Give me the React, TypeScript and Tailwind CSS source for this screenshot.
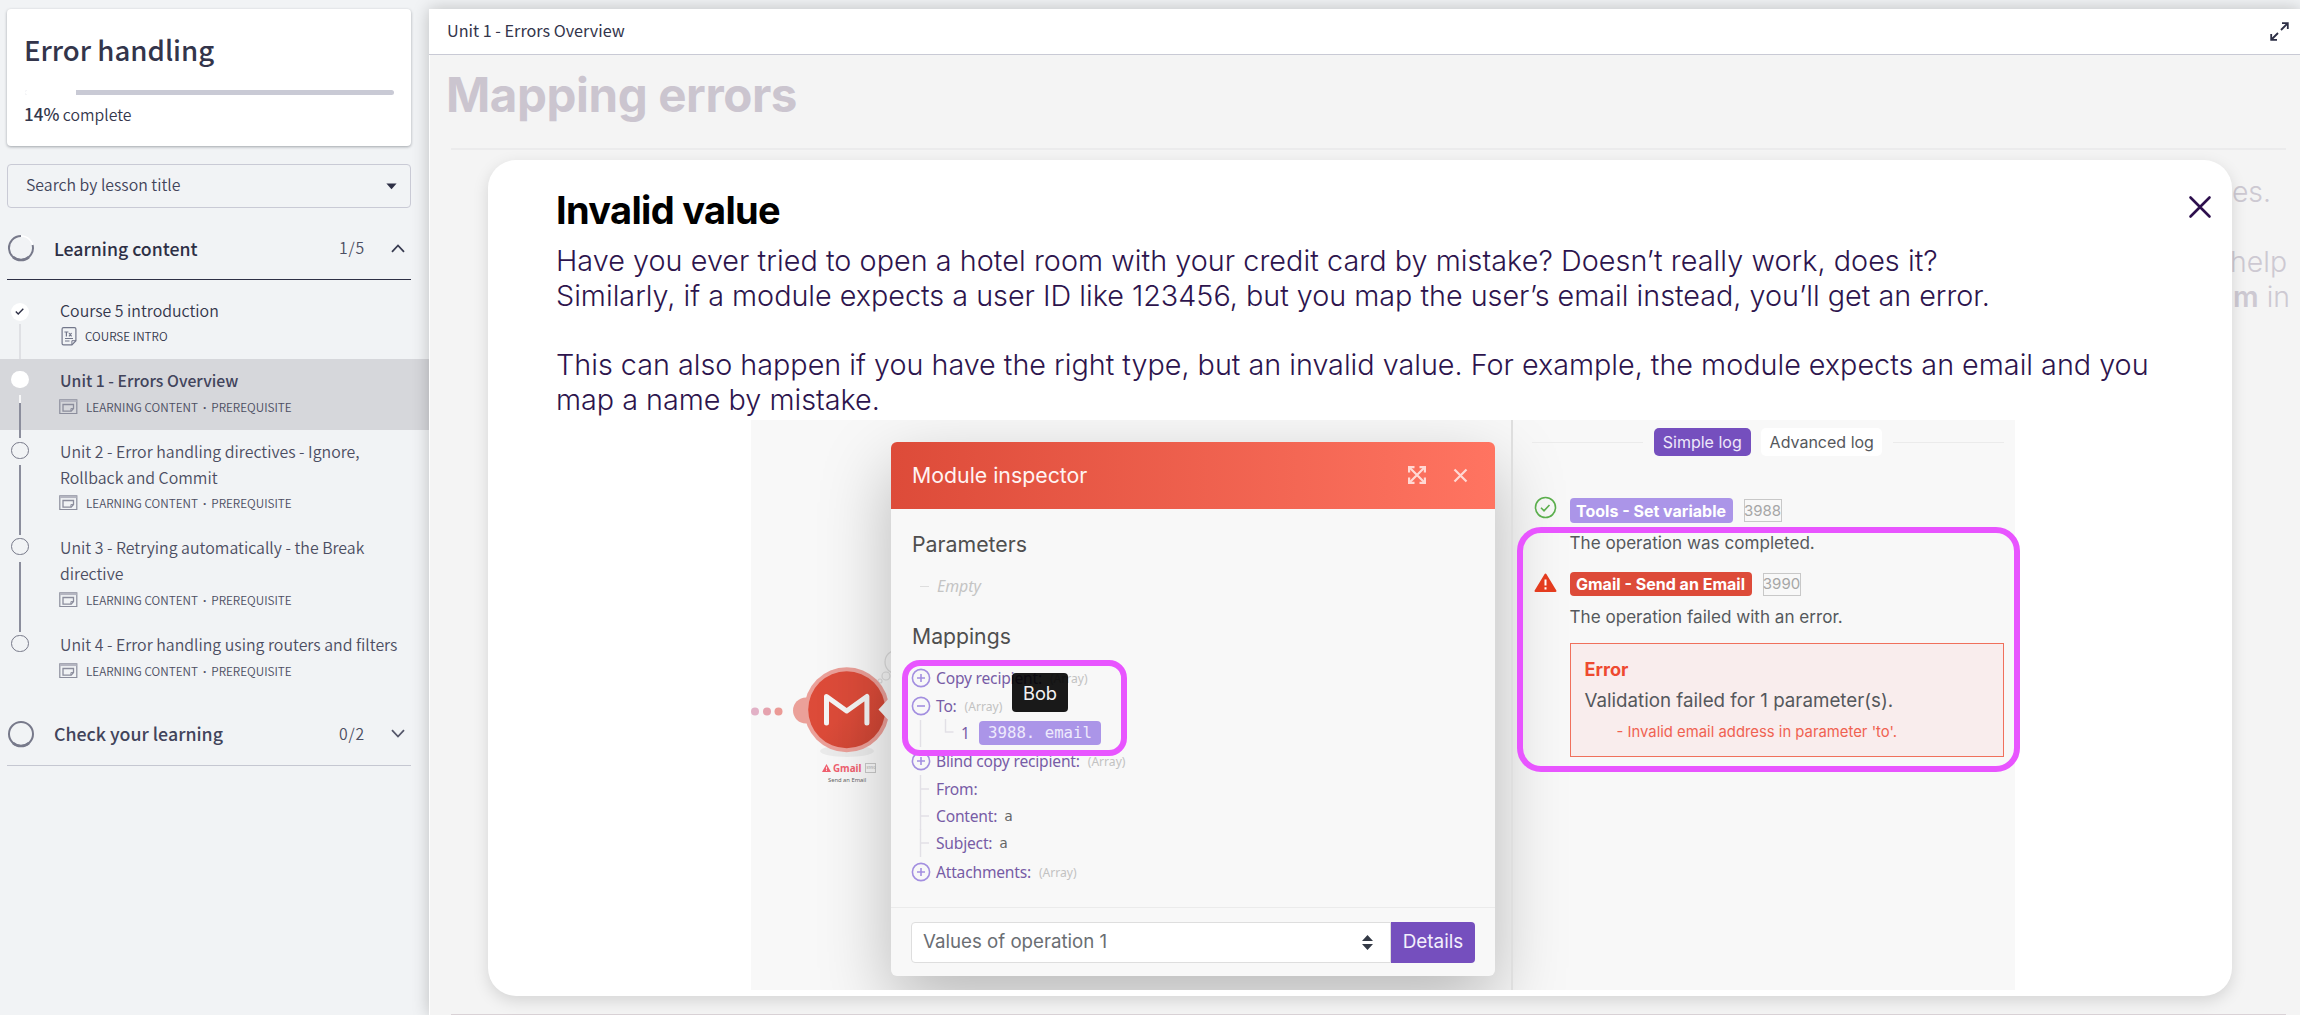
import type { ReactNode } from 'react'

const CJK = "font-['Noto_Sans_CJK_SC',sans-serif]"

function LessonIcon() {
  return (
    <svg width="19" height="16" viewBox="0 0 19 16" fill="none" className="-ml-px shrink-0" stroke="#8b8d9c">
      <path d="M.8.8h17v13.7H.8z" strokeWidth="1.2" />
      <path d="M1 2h16.6" strokeWidth="2.2" stroke="#b4b5c0" />
      <path d="M4 5.5h10.5v4l-2.3 2.7H4z" strokeWidth="1.3" />
      <path d="M14.5 9.6h-2.6v2.6" strokeWidth="1" />
    </svg>
  )
}

function TextIcon() {
  return (
    <svg width="16" height="19" viewBox="0 0 16 19" fill="none" className="ml-px shrink-0" stroke="#73778a">
      <path d="M2.5.7h11q1.400 0 1.400 1.400v11.600l-4 4.200H2.500q-1.400 0-1.400-1.400V2.100Q1.100.7 2.500.7z" strokeWidth="1.2" />
      <path d="M14.900 13.700h-4v4.200M4 11.500h8M4 14h4.500" strokeWidth="1" />
      <path d="M3.400 5h4M5.400 5v4.400M8 6l2.600 3.400M10.600 6L8 9.400" strokeWidth="1.2" />
    </svg>
  )
}

type LessonProps = {
  title: ReactNode
  kind: ReactNode
  box: string
  meta: string
  state?: 'done' | 'current' | 'todo'
  line?: string
  dot?: string
}

function Lesson({ title, kind, box, meta, state = 'todo', line, dot = 'top-[11.5px]' }: LessonProps) {
  const ink = state === 'done' ? 'text-[#34374c]' : 'text-[#4c4e62]'
  return (
    <li className={`relative pl-[60px] pt-[9px] ${box} ${state === 'current' ? 'bg-[#d6d7db]' : ''}`}>
      {line && <span className={`absolute left-[19px] w-[1.5px] ${line}`} />}
      {state === 'current' && <span className="absolute left-[19px] top-[36px] h-[8px] w-[1.5px] bg-white/80" />}
      <span
        className={`absolute left-[11px] flex size-[17.5px] items-center justify-center rounded-full ${dot} ${
          state === 'todo' ? 'border border-[#777989]' : 'bg-white'
        }`}
      >
        {state === 'done' && (
          <svg width="9" height="7" viewBox="0 0 9 7" fill="none">
            <path d="M.8 3.6L3.2 6 8.3.8" stroke="#2d2f45" strokeWidth="1.4" />
          </svg>
        )}
      </span>
      <div
        className={`whitespace-nowrap leading-[26px] ${
          state === 'current' ? 'text-[15.8px] font-medium text-[#42445b]' : `text-[15.9px] font-[350] ${ink}`
        }`}
      >
        {title}
      </div>
      <div className={`flex h-[16px] items-center gap-[8px] text-[11.75px] font-[350] leading-[16px] ${ink} ${meta}`}>
        {state === 'done' ? <TextIcon /> : <LessonIcon />}
        <span className="whitespace-nowrap">{kind}</span>
      </div>
    </li>
  )
}

function Sidebar() {
  const kind = (
    <>
      LEARNING CONTENT<span className="mx-[5px] font-['Noto_Sans',sans-serif] font-bold">·</span>PREREQUISITE
    </>
  )
  return (
    <aside className={`w-[429px] shrink-0 text-[#2d2f45] ${CJK}`}>
      <div className="ml-[7px] mt-[9px] h-[137px] w-[404px] rounded-[4px] bg-white px-[18px] pt-[24px] shadow-[0_1px_3px_rgba(40,50,60,0.4)]">
        <h1 className="-ml-px text-[27.6px] font-medium leading-[32px] text-[#33354b]">Error handling</h1>
        <div className="mt-[25px] h-[5px] w-[369px] overflow-hidden rounded-full bg-[#c9cad5]">
          <div className="h-full w-[51px] bg-white" />
        </div>
        <p className="-ml-px mt-[9px] text-[15.8px] font-[350] leading-[20px] text-[#34374c]">
          <span className="text-[17px] font-medium">14%</span> complete
        </p>
      </div>

      <div className="ml-[7px] mt-[18px] flex h-[44px] w-[404px] items-center justify-between rounded-[4px] border border-[#c9cad5] pb-[3px] pl-[18px] pr-[13px] text-[15.85px] font-[350] leading-[20px] text-[#42445a]">
        <span>Search by lesson title</span>
        <svg width="11" height="7" viewBox="0 0 11 7" className="mt-[3px]">
          <path d="M.4.4h10.2L5.5 6.2z" fill="#2d2f45" />
        </svg>
      </div>

      <div className="ml-[7px] mt-[9px] flex h-[63px] w-[404px] items-center border-b border-[#2d2f45]">
        <svg width="28" height="28" viewBox="0 0 28 28" fill="none">
          <circle cx="14" cy="14" r="12" stroke="#fff" strokeWidth="1.6" />
          <path d="M14 2a12 12 0 1 0 11.6 9" stroke="#77798a" strokeWidth="2" />
          <path d="M6 23a12 12 0 0 0 16 0" stroke="#77798a" strokeWidth="2.6" />
        </svg>
        <h2 className="ml-[19px] flex-1 pb-px text-[17.7px] font-medium leading-[24px]">Learning content</h2>
        <span className="mr-[26px] text-[15.8px] font-[350] tracking-[0.8px] text-[#4c4e62]">1/5</span>
        <svg width="14" height="9" viewBox="0 0 14 9" fill="none" className="mr-[6px]">
          <path d="M1 7.8L7 1.5l6 6.3" stroke="#383b50" strokeWidth="1.8" />
        </svg>
      </div>

      <ul className="mt-[9px]">
        <Lesson
          title="Course 5 introduction"
          kind="COURSE INTRO"
          box="h-[70px]"
          meta="mt-[4px]"
          state="done"
          line="top-[35px] h-[44px] bg-[#dfe0e4]"
          dot="top-[14px]"
        />
        <Lesson
          title="Unit 1 - Errors Overview"
          kind={kind}
          box="h-[71px]"
          meta="mt-[5px]"
          state="current"
          line="top-[44px] h-[35px] z-10 bg-[#8b8d9c]"
        />
        <Lesson
          title={<>Unit 2 - Error handling directives - Ignore,<br />Rollback and Commit</>}
          kind={kind}
          box="h-[96px]"
          meta="mt-[4px]"
          line="top-[35px] h-[70px] bg-[#8b8d9c]"
        />
        <Lesson
          title={<>Unit 3 - Retrying automatically - the Break<br />directive</>}
          kind={kind}
          box="h-[97px]"
          meta="mt-[5px]"
          line="top-[36px] h-[70px] bg-[#8b8d9c]"
        />
        <Lesson title="Unit 4 - Error handling using routers and filters" kind={kind} box="h-[79px]" meta="mt-[5px]" />
      </ul>

      <div className="ml-[7px] flex h-[64px] w-[404px] items-center border-b border-[#c5c7d1]">
        <svg width="28" height="28" viewBox="0 0 28 28" fill="none" stroke="#77798a">
          <circle cx="14" cy="14" r="12" strokeWidth="2" />
          <path d="M6 23a12 12 0 0 0 16 0" strokeWidth="2.6" />
        </svg>
        <h2 className="ml-[19px] flex-1 pb-px text-[17.8px] font-medium leading-[24px] text-[#42445b]">Check your learning</h2>
        <span className="mr-[26px] text-[15.8px] font-[350] tracking-[0.8px] text-[#4c4e62]">0/2</span>
        <svg width="14" height="9" viewBox="0 0 14 9" fill="none" className="mr-[6px]">
          <path d="M1 1.2l6 6.3 6-6.3" stroke="#55576a" strokeWidth="1.8" />
        </svg>
      </div>
    </aside>
  )
}

function Toggle({ open = false }: { open?: boolean }) {
  return (
    <svg width="20" height="20" viewBox="0 0 20 20" fill="none" stroke="#a38fe0" strokeWidth="1.6" className="-ml-px mr-[5px] shrink-0">
      <circle cx="10" cy="10" r="8.6" />
      <path d={open ? 'M6 10h8' : 'M6 10h8M10 6v8'} />
    </svg>
  )
}

function Branch() {
  return (
    <svg width="19" height="28" viewBox="0 0 19 28" stroke="#e2e0e6" strokeWidth="1.4" className="mr-[5px] shrink-0">
      <path d="M8.5 0v28M9 14h8" />
    </svg>
  )
}

function Row({ h, lead, name, children }: { h: string; lead: ReactNode; name: string; children?: ReactNode }) {
  return (
    <div className={`flex items-center ${h}`}>
      {lead}
      <span className="pt-px text-[15.6px] tracking-[-0.2px] text-[#775ca6]">{name}</span>
      {children}
    </div>
  )
}

const ArrayTag = () => <span className="ml-[8px] pt-px text-[12.1px] text-[#c2c2c2]">(Array)</span>
const Value = () => <span className="ml-[7px] font-['DejaVu_Sans_Mono',monospace] text-[14px] leading-[20px] text-[#666]">a</span>

function Inspector() {
  return (
    <div className="absolute left-[140px] top-[22.5px] z-10 flex h-[534px] w-[604px] flex-col rounded-[6px] bg-[#f8f8f8] font-[Inter,sans-serif] shadow-[0_26px_70px_rgba(0,0,0,0.26)]">
      <div className="flex h-[67px] shrink-0 items-center rounded-t-[6px] bg-linear-to-r from-[#dd4b39] to-[#ff7461] pb-px pl-[21px] pr-[27px]">
        <h3 className="flex-1 text-[21.3px] text-[#fff3f2]">Module inspector</h3>
        <svg width="18" height="18" viewBox="0 0 18 18" fill="none" stroke="#ffd9d4" strokeWidth="2.2" className="mr-[27px]">
          <path d="M1.100 6.500V1.100h5.400M11.500 1.100h5.400v5.400M16.900 11.500v5.400h-5.400M6.500 16.900H1.100v-5.400" />
          <path d="M2 2l14 14M16 2L2 16" />
        </svg>
        <svg width="15" height="15" viewBox="0 0 15 15" stroke="#ffd9d4" strokeWidth="2.2">
          <path d="M1.500 1.500l12 12M13.500 1.500l-12 12" />
        </svg>
      </div>
      <div className="flex-1 pl-[21px] pt-[20px] font-['Noto_Sans',sans-serif]">
        <h4 className="font-[Inter,sans-serif] text-[21.3px] leading-[31px] text-[#4f4f4f]">Parameters</h4>
        <div className="mt-[16px] flex h-[20px] items-center">
          <span className="ml-[8px] mr-[8px] h-[1.5px] w-[9px] bg-[#dedede]" />
          <span className="text-[15.9px] italic text-[#c4c4c4]">Empty</span>
        </div>
        <h4 className="font-[Inter,sans-serif] mt-[24px] text-[21.2px] leading-[32px] text-[#4f4f4f]">Mappings</h4>
        <div className="mt-[12px]">
          <Row h="h-[28px]" lead={<Toggle />} name="Copy recipient:">
            <ArrayTag />
          </Row>
          <Row h="h-[28px]" lead={<Toggle open />} name="To:">
            <ArrayTag />
          </Row>
          <div className="flex h-[26px] items-center">
            <svg width="42" height="28" viewBox="0 0 42 28" fill="none" stroke="#e2e0e6" strokeWidth="1.4" className="mr-[7px] shrink-0">
              <path d="M8.500 1v27M33.500 0v13h8" />
            </svg>
            <span className="w-[18px] text-[15.500px] text-[#775ca6]">1</span>
            <span className="flex h-[24px] w-[122px] items-center justify-center rounded-[4px] bg-[#ab95e8] font-['DejaVu_Sans_Mono',monospace] text-[15.700px] font-light leading-[20px] text-[#eeeafc]">
              3988. email
            </span>
          </div>
          <div className="mt-px">
            <Row h="h-[28px]" lead={<Toggle />} name="Blind copy recipient:">
              <ArrayTag />
            </Row>
          </div>
          <Row h="h-[27px]" lead={<Branch />} name="From:" />
          <Row h="h-[27px]" lead={<Branch />} name="Content:">
            <Value />
          </Row>
          <Row h="h-[28px]" lead={<Branch />} name="Subject:">
            <Value />
          </Row>
          <Row h="h-[30px]" lead={<Toggle />} name="Attachments:">
            <ArrayTag />
          </Row>
        </div>
      </div>
      <div className="flex h-[69px] shrink-0 items-center border-t border-[#ebebeb] px-[20px]">
        <div className="flex h-[41px] flex-1 items-center justify-between rounded-l-[4px] border border-[#dedede] bg-white pl-[11px] pr-[17px] text-[18.700px] text-[#6a6e73]">
          Values of operation 1
          <svg width="11" height="15" viewBox="0 0 11 15" fill="#343a46">
            <path d="M5.500 0L11 6H0zM5.500 15L0 9h11z" />
          </svg>
        </div>
        <div className="flex h-[41px] w-[84px] items-center justify-center rounded-r-[4px] bg-[#754fbe] text-[18.900px] text-[#f3effc]">
          Details
        </div>
      </div>
    </div>
  )
}

function GmailNode() {
  return (
    <>
      <svg width="145" height="170" viewBox="0 0 145 170" className="absolute left-0 top-[210px]">
        <defs>
          <linearGradient id="node" x1="0" x2="1" y1="0" y2="1">
            <stop offset="0" stopColor="#dd4b39" />
            <stop offset=".5" stopColor="#dc4b39" />
            <stop offset="1" stopColor="#c94433" />
          </linearGradient>
        </defs>
        <ellipse cx="96" cy="121" rx="27" ry="6" fill="#000" opacity=".05" />
        <g fill="none" stroke="#dcdcdc" strokeWidth="1.200">
          <circle cx="146" cy="32" r="12" />
          <circle cx="135" cy="46" r="4" />
          <circle cx="129" cy="51" r="2" />
        </g>
        <circle cx="4" cy="81.500" r="4" fill="#e2b1c6" />
        <circle cx="16" cy="81.500" r="4" fill="#e5a2ae" />
        <circle cx="27.500" cy="81.500" r="4" fill="#eb9a96" />
        <circle cx="55" cy="80.500" r="13" fill="#eba099" />
        <circle cx="95.700" cy="79.800" r="42.500" fill="#eba099" />
        <circle cx="95.700" cy="79.800" r="38.500" fill="url(#node)" />
        <path d="M75.500 93V66.500l20.200 14.500 20.200-14.500V93" fill="none" stroke="#f5f5f5" strokeWidth="5" strokeLinecap="round" strokeLinejoin="round" />
        <path d="M127.500 79.500L140 66v27z" fill="#f8f8f8" />
      </svg>
      <div className="absolute left-[71px] top-[343px] flex h-[11px] items-center font-['Noto_Sans',sans-serif]">
        <svg width="9" height="8" viewBox="0 0 9 8">
          <path d="M4.500 0L9 8H0z" fill="#f0606f" />
          <path d="M4.500 2.800v2.700M4.500 6v1" stroke="#fff" strokeWidth=".8" />
        </svg>
        <span className="ml-[2px] text-[9.800px] font-bold leading-[11px] text-[#f0606f]">Gmail</span>
        <span className="ml-[4px] flex h-[10px] w-[11px] items-center justify-center border border-[#c8c8c8] text-[4px] text-[#aaa]">
          3990
        </span>
      </div>
      <span className="absolute left-[77px] top-[355px] whitespace-nowrap font-['Noto_Sans',sans-serif] text-[5.800px] leading-[10px] text-[#666]">
        Send an Email
      </span>
    </>
  )
}

function LogPanel() {
  return (
    <div className="w-[502px] shrink-0 pl-[19px] pr-[11px] pt-[8.500px] font-[Inter,sans-serif] text-[17.100px] text-[#55585c]">
      <div className="flex items-center gap-[10.500px] text-[16px]">
        <span className="h-[1.500px] flex-1 bg-[#ebebeb]" />
        <span className="flex h-[28px] w-[97px] items-center justify-center rounded-[5px] bg-[#754fbe] text-[#eee8fa]">Simple log</span>
        <span className="flex h-[28px] w-[121px] items-center justify-center rounded-[5px] bg-white">Advanced log</span>
        <span className="h-[1.500px] flex-1 bg-[#ebebeb]" />
      </div>

      <div className="mt-[42.500px] grid grid-cols-[35.500px_1fr] pl-[2px]">
        <svg width="23" height="23" viewBox="0 0 23 23" fill="none" stroke="#5aae4c" strokeWidth="1.600" className="-mt-[2.500px]">
          <circle cx="11.500" cy="11.500" r="10" />
          <path d="M7 11.800l3 3 5.500-5.800" />
        </svg>
        <div>
          <div className="flex h-[24px] items-center gap-[11px]">
            <span className="flex h-[25px] w-[163px] items-center justify-center rounded-[4px] bg-[#ab95e8] text-[16px] font-bold text-white">
              Tools - Set variable
            </span>
            <span className="flex h-[23px] w-[38px] items-center justify-center border border-[#c8c8c8] text-[15px] text-[#a6a6a6]">3988</span>
          </div>
          <p className="mt-[8px] leading-[24px]">The operation was completed.</p>
        </div>
      </div>

      <div className="mt-[17.500px] grid grid-cols-[35.500px_1fr] pl-[2px]">
        <svg width="23" height="20" viewBox="0 0 23 20" className="mt-px">
          <path d="M11.500 1.500L21.500 18h-20z" fill="#e43c1f" stroke="#e43c1f" strokeWidth="2" strokeLinejoin="round" />
          <path d="M11.500 6.500v6M11.500 14.200v2.200" stroke="#fff" strokeWidth="2" />
        </svg>
        <div>
          <div className="flex h-[24px] items-center gap-[11px]">
            <span className="flex h-[24px] w-[182px] items-center justify-center rounded-[4px] bg-[#dd4b39] text-[16.050px] font-bold text-white">
              Gmail - Send an Email
            </span>
            <span className="flex h-[23px] w-[38px] items-center justify-center border border-[#c8c8c8] text-[15px] text-[#a6a6a6]">3990</span>
          </div>
          <p className="mt-[8.500px] leading-[24px]">The operation failed with an error.</p>
          <div className="mt-[14.500px] h-[114px] border border-[#f0705c] bg-[#f9eded] pl-[14px] pt-[10px]">
            <h5 className="text-[18.100px] font-bold leading-[30px] text-[#ee4a30]">Error</h5>
            <p className="text-[18.750px] leading-[34px]">Validation failed for 1 parameter(s).</p>
            <p className="pl-[32px] text-[14.850px] leading-[28px] text-[#f06251]">- Invalid email address in parameter 'to'.</p>
          </div>
        </div>
      </div>
    </div>
  )
}

function Figure() {
  return (
    <div className="relative ml-[195px] mt-[2px] flex h-[570px] w-[1264px] overflow-hidden bg-[#f8f8f8]">
      <div className="w-[760px] shrink-0">
        <GmailNode />
        <Inspector />
      </div>
      <div className="z-10 w-[2px] shrink-0 bg-[#dedede]" />
      <div className="relative z-20">
        <LogPanel />
      </div>
      <div className="absolute left-[151px] top-[240px] z-20 h-[96px] w-[225px] rounded-[18px] border-[6px] border-[#e855ff]" />
      <div className="absolute left-[261px] top-[253.500px] z-30 flex h-[38.500px] w-[56px] items-center justify-center rounded-[4px] bg-black/90 pt-px font-[Inter,sans-serif] text-[18.300px] text-[#f2f2f2]">
        Bob
      </div>
    </div>
  )
}

function Dialog() {
  return (
    <section className="absolute left-[58px] top-[105px] h-[836px] w-[1744px] rounded-[28px] bg-white pl-[68px] pt-[27px] font-[Inter,sans-serif] shadow-[0_5px_16px_rgba(0,0,0,0.13)]">
      <h3 className="text-[38px] font-bold leading-[46px] tracking-[-0.68px] text-black">Invalid value</h3>
      <p className="mt-[11px] whitespace-nowrap text-[28.740px] font-light leading-[34.800px] text-[#2d144d]">
        <span className="tracking-[0.06px]">
          Have you ever tried to open a hotel room with your credit card by mistake? Doesn’t really work, does it?
        </span>
        <br />
        Similarly, if a module expects a user ID like 123456, but you map the user’s email instead, you’ll get an error.
        <br />
        <br />
        This can also happen if you have the right type, but an invalid value. For example, the module expects an email and you
        <br />
        map a name by mistake.
      </p>
      <Figure />
      <div className="absolute left-[1029px] top-[367px] z-30 h-[245px] w-[503px] rounded-[24px] border-[6px] border-[#e855ff]" />
      <svg width="24" height="24" viewBox="0 0 24 24" className="absolute left-[1699.500px] top-[34.500px]">
        <path d="M2.500 2.500l19 19M21.500 2.500l-19 19" stroke="#2d0f4d" strokeWidth="2.600" strokeLinecap="round" />
      </svg>
    </section>
  )
}

export default function App() {
  return (
    <div className="flex h-[1015px] w-[2300px] overflow-hidden bg-[#f1f3f5]">
      <Sidebar />
      <main className="relative z-10 mt-[9px] flex flex-1 flex-col bg-white shadow-[0_0_16px_rgba(0,0,0,0.22)]">
        <header className={`flex h-[46px] shrink-0 items-center justify-between border-b border-[#c9cad5] pb-[2px] pl-[18px] pr-[11px] ${CJK}`}>
          <span className="text-[16.200px] text-[#33354b]">Unit 1 - Errors Overview</span>
          <svg width="19" height="19" viewBox="0 0 19 19" fill="none" stroke="#2d2f45" strokeWidth="1.800" className="mt-px">
            <path d="M12 1.200h5.800V7M17.500 1.500l-6.500 6.500M7 17.800H1.200V12M1.500 17.500L8 11" />
          </svg>
        </header>
        <div className="relative ml-px flex flex-1 flex-col overflow-hidden bg-[#f4f4f4] font-[Inter,sans-serif]">
          <h2 className="ml-[16px] mt-[12px] text-[47.500px] font-bold leading-[56px] tracking-[-0.400px] text-[#cbc5cf]">Mapping errors</h2>
          <div className="ml-[21px] mr-[14px] mt-[25px] h-[2px] bg-[#ebebec]" />
          <div className="mt-[24px] text-right text-[28.400px] font-light leading-[35px] text-[#cdc9d2]">
            <p className="pr-[29px]">es.</p>
            <p className="pr-[13px] pt-[35px]">help</p>
            <p className="pr-[10px]">
              <span className="font-semibold">m</span> in
            </p>
          </div>
          <div className="ml-[21px] mr-[14px] mt-auto h-px bg-[#d9d2d6]" />
          <Dialog />
        </div>
      </main>
    </div>
  )
}
